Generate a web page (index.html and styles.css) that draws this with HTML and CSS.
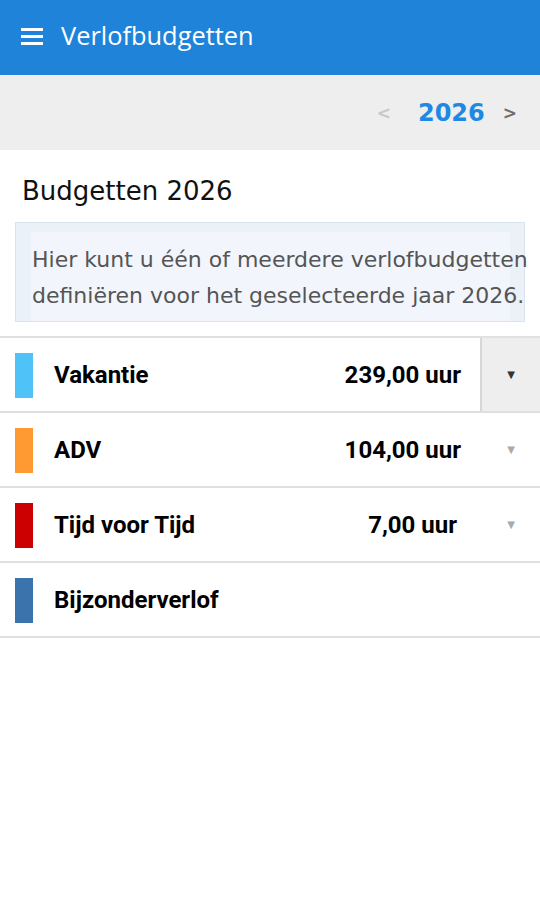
FILE: index.html
```html
<!DOCTYPE html>
<html lang="nl">
<head>
<meta charset="utf-8">
<title>Verlofbudgetten</title>
<link rel="stylesheet" href="styles.css">
</head>
<body>
<header class="appbar">
  <span class="menu-icon"><span></span><span></span><span></span></span>
  <h1 class="appbar-title">Verlofbudgetten</h1>
</header>
<nav class="yearbar">
  <span class="nav prev">&lt;</span>
  <span class="year">2026</span>
  <span class="nav next">&gt;</span>
</nav>
<main class="content">
  <h2 class="heading">Budgetten 2026</h2>
  <div class="info">
    <div class="info-inner">
      <p>Hier kunt u één of meerdere verlofbudgetten definiëren voor het geselecteerde jaar 2026.</p>
    </div>
  </div>
</main>
<ul class="list">
  <li class="row">
    <span class="swatch c1"></span>
    <span class="name">Vakantie</span>
    <span class="value">239,00 uur</span>
    <span class="drop active">▼</span>
  </li>
  <li class="row">
    <span class="swatch c2"></span>
    <span class="name">ADV</span>
    <span class="value">104,00 uur</span>
    <span class="drop">▼</span>
  </li>
  <li class="row">
    <span class="swatch c3"></span>
    <span class="name">Tijd voor Tijd</span>
    <span class="value v3">7,00 uur</span>
    <span class="drop">▼</span>
  </li>
  <li class="row">
    <span class="swatch c4"></span>
    <span class="name">Bijzonderverlof</span>
    <span class="value"></span>
    <span class="drop empty"></span>
  </li>
</ul>
</body>
</html>
```
FILE: styles.css
```css
html, body {
  margin: 0;
  padding: 0;
  background: #fff;
}
body {
  font-family: "DejaVu Sans", sans-serif;
  width: 540px;
}
.appbar {
  height: 75px;
  background: #1e83d9;
  display: flex;
  align-items: center;
  padding: 0 0 0 21px;
  box-sizing: border-box;
}
.menu-icon {
  display: flex;
  flex-direction: column;
  gap: 4px;
  width: 22px;
  margin-right: 18px;
  margin-top: -3px;
}
.menu-icon span {
  display: block;
  height: 3px;
  background: #fff;
}
.appbar-title {
  margin: 0 0 6px;
  font-family: "Open Sans", sans-serif;
  font-weight: 400;
  font-size: 25.4px;
  line-height: 32px;
  color: #fff;
}
.yearbar {
  height: 75px;
  background: #eeeeee;
  display: flex;
  align-items: center;
  justify-content: flex-end;
  padding-right: 23px;
  box-sizing: border-box;
  font-family: "DejaVu Sans", sans-serif;
  font-weight: bold;
}
.nav {
  font-size: 17px;
}
.prev {
  color: #c8c8c8;
}
.next {
  color: #6f6f6f;
}
.year {
  color: #1e88e5;
  font-size: 24px;
  margin: 0 18px 0 27px;
}
.content {
  padding: 0 15px;
}
.heading {
  margin: 0;
  padding: 25px 0 0 7px;
  font-weight: 400;
  font-size: 26px;
  color: #111;
  line-height: 32px;
  height: 47px;
}
.info {
  background: #ebf1f8;
  border: 1px solid #d9e4f0;
  padding: 9px 14px 0 15px;
  height: 89px;
}
.info-inner {
  background: #f2f6fc;
  height: 89px;
}
.info p {
  margin: 0;
  width: 505px;
  font-size: 22px;
  line-height: 36px;
  color: #555;
  padding: 10px 0 0 1px;
  box-sizing: border-box;
}
.list {
  list-style: none;
  margin: 14px 0 0;
  padding: 0;
  border-top: 2px solid #e0e0e0;
}
.row {
  display: flex;
  align-items: center;
  height: 73px;
  border-bottom: 2px solid #e0e0e0;
  font-family: Roboto, sans-serif;
  font-weight: bold;
  font-size: 24px;
  color: #000;
}
.swatch {
  width: 18px;
  height: 45px;
  margin: 1px 21px 0 15px;
}
.c1 { background: #4fc3f7; }
.c2 { background: #ff9a33; }
.c3 { background: #cc0000; }
.c4 { background: #3b74ad; }
.name {
  flex: 1;
}
.value {
  text-align: right;
  padding-right: 19px;
}
.value.v3 {
  padding-right: 23px;
}
.drop {
  width: 58px;
  align-self: stretch;
  display: flex;
  align-items: center;
  justify-content: center;
  font-size: 10px;
  color: #aaa;
  font-family: "DejaVu Sans", sans-serif;
  border-left: 2px solid transparent;
}
.drop.active {
  background: #eeeeee;
  border-left-color: #d6d6d6;
  color: #333;
}
```
